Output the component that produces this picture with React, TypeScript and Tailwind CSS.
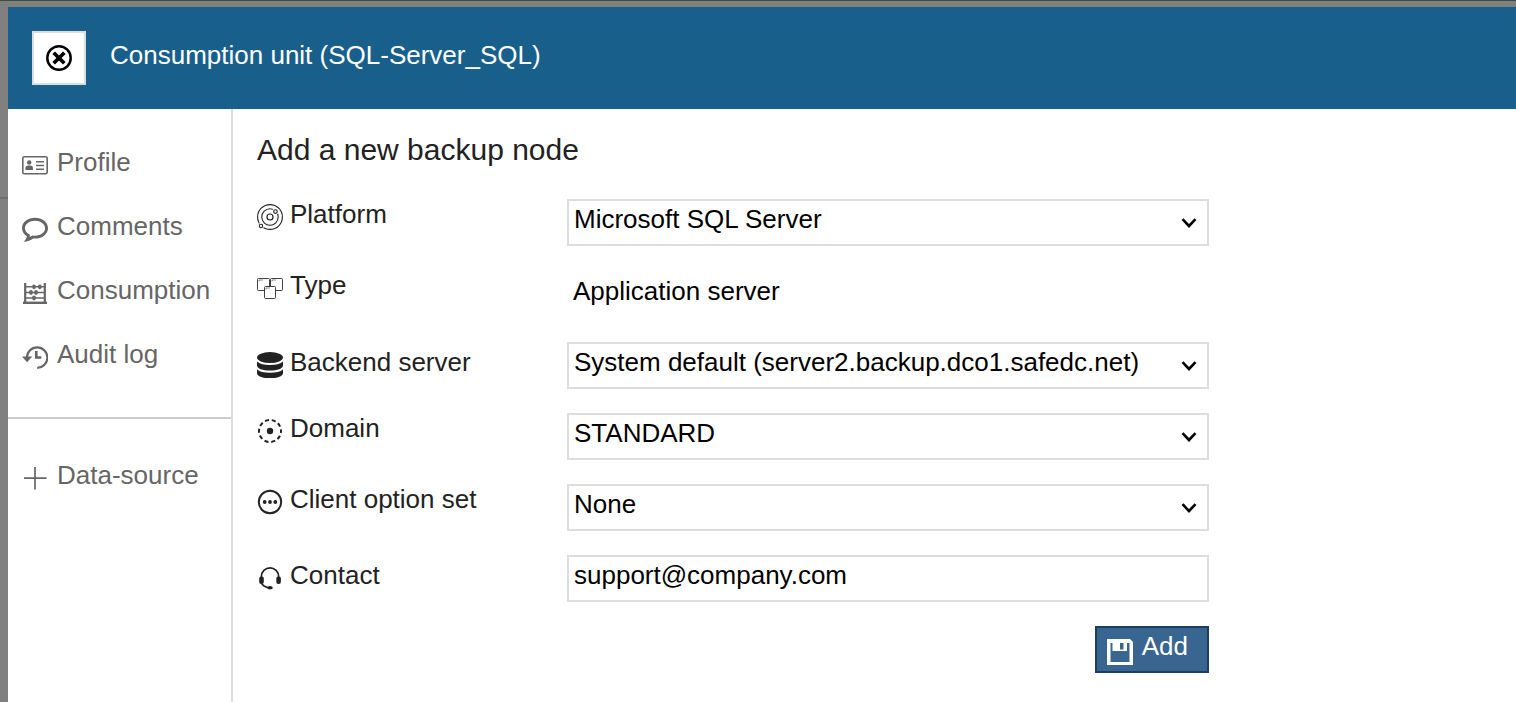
import React, { ReactNode } from 'react';

function Icon({ children, size = 'h-[26px] w-[26px]' }: { children: ReactNode; size?: string }) {
  return (
    <svg viewBox="0 0 26 26" className={`${size} shrink-0`} fill="none" stroke="currentColor" aria-hidden="true">
      {children}
    </svg>
  );
}

const icons = {
  close: (
    <Icon>
      <circle cx="13" cy="13" r="11.7" strokeWidth="2.5" />
      <path d="M7.700 7.700l10.600 10.600M18.300 7.700L7.700 18.300" strokeWidth="3.700" />
    </Icon>
  ),
  profile: (
    <Icon>
      <rect x="0.800" y="4.800" width="24.400" height="17" rx="1.600" strokeWidth="1.600" />
      <circle cx="7.200" cy="10.500" r="2.200" fill="currentColor" stroke="none" />
      <path d="M3.400 18v-1.600c0-2 1.400-2.900 2.600-2.900h2.400c1.400 0 2.600.9 2.600 2.900V18z" fill="currentColor" stroke="none" />
      <path d="M14 9.700h8M14 13.500h8M14 17.200h8" strokeWidth="1.500" />
    </Icon>
  ),
  comments: (
    <Icon>
      <path
        fill="currentColor"
        stroke="none"
        fillRule="evenodd"
        d="M13 1.800C5.800 1.800 0 6.400 0 12.200c0 3.200 1.900 6.200 4.900 8.100-.2 2.200-1.400 3.900-3.400 5.500 4.200-.3 7.300-1.500 9.700-3.300.6.100 1.200.1 1.800.1 7.200 0 13-4.600 13-10.400S20.200 1.800 13 1.800zM13 4.800c5.600 0 10.100 3.300 10.100 7.500s-4.500 7.400-10.100 7.400c-.9 0-1.800-.1-2.700-.300l-2.600 1.700.3-2.400C4.900 17.400 2.900 15 2.900 12.300 2.900 8.100 7.400 4.800 13 4.800z"
      />
    </Icon>
  ),
  consumption: (
    <Icon>
      <path d="M3.200 3v20M22.800 3v20" strokeWidth="2.200" />
      <path d="M1 22.800h24" strokeWidth="2.400" />
      <path d="M4 6.800h18M4 12.500h18M4 18h18" strokeWidth="1.400" />
      <g fill="currentColor" stroke="none">
        <ellipse cx="12" cy="6.800" rx="1.900" ry="2.400" />
        <ellipse cx="17.800" cy="6.800" rx="1.900" ry="2.400" />
        <ellipse cx="9" cy="12.500" rx="1.900" ry="2.400" />
        <ellipse cx="14" cy="12.500" rx="1.900" ry="2.400" />
        <ellipse cx="12" cy="18" rx="1.900" ry="2.400" />
      </g>
    </Icon>
  ),
  audit: (
    <Icon>
      <path d="M5 13.500A10.200 10.200 0 1 1 15.200 23.800" strokeWidth="2.200" />
      <path d="M0 12.400h10.200l-5.100 5.800z" fill="currentColor" stroke="none" />
      <path d="M14.300 7v6.500h5" strokeWidth="2.600" />
    </Icon>
  ),
  plus: (
    <Icon>
      <path d="M13 2v22.500M2 13.200h22.500" strokeWidth="1.700" />
    </Icon>
  ),
  platform: (
    <Icon>
      <circle cx="13" cy="13" r="12.400" strokeWidth="1.100" />
      <circle cx="13" cy="13" r="8.200" strokeWidth="1.100" />
      <circle cx="13" cy="13" r="3" strokeWidth="1.200" />
      <circle cx="18.500" cy="7.600" r="3.100" fill="white" stroke="none" />
      <circle cx="18.500" cy="7.600" r="1.800" strokeWidth="1.100" />
      <circle cx="4" cy="22" r="3" fill="white" stroke="none" />
      <circle cx="4" cy="22" r="1.700" strokeWidth="1.100" />
    </Icon>
  ),
  type: (
    <Icon>
      <g strokeOpacity="0.850">
        <rect x="0.500" y="3.500" width="12" height="12" rx="1" />
        <rect x="13.500" y="3.500" width="12" height="12" rx="1" />
        <rect x="7.500" y="11.500" width="11" height="12" rx="1" fill="white" />
      </g>
      <path d="M2 6.500V5h4M15 6.500V5h4M9 14.500V13h4" strokeWidth="0.500" />
    </Icon>
  ),
  database: (
    <Icon>
      <g fill="currentColor" stroke="none">
        <ellipse cx="13" cy="5.600" rx="13" ry="5.500" />
        <path d="M0 9.500c2.500 2.500 7 3.400 13 3.400s10.500-.9 13-3.400v4c0 3-5.800 5.100-13 5.100S0 16.500 0 13.500z" />
        <path d="M0 17.300c2.500 2.600 7 3.500 13 3.500s10.500-.9 13-3.500v4c0 3-5.800 5-13 5s-13-2-13-5z" />
      </g>
    </Icon>
  ),
  domain: (
    <Icon>
      <circle cx="13" cy="13" r="11" strokeWidth="2" strokeDasharray="4.100 2.810" strokeDashoffset="2" />
      <circle cx="13" cy="13" r="3.200" fill="currentColor" stroke="none" />
    </Icon>
  ),
  options: (
    <Icon>
      <circle cx="13" cy="13" r="11.200" strokeWidth="2" />
      <g fill="currentColor" stroke="none">
        <circle cx="7.700" cy="13" r="1.900" />
        <circle cx="13" cy="13" r="1.900" />
        <circle cx="18.300" cy="13" r="1.900" />
      </g>
    </Icon>
  ),
  contact: (
    <Icon>
      <path d="M4.400 13V11.500a8.600 8.600 0 0 1 17.200 0V13" strokeWidth="1.700" />
      <path d="M4.500 18.500l2.500 2.500 4 1.700" strokeWidth="1.700" />
      <g fill="currentColor" stroke="none">
        <rect x="2.200" y="11.500" width="4.600" height="7.400" rx="2" />
        <rect x="19.300" y="11.500" width="4.600" height="7.400" rx="2" />
        <ellipse cx="13" cy="22.800" rx="2.800" ry="1.700" />
      </g>
    </Icon>
  ),
  save: (
    <Icon>
      <path fillRule="evenodd" fill="currentColor" stroke="none" d="M0 0h23l3 3v23H0zM3.500 4v19h19V4h-2.500v8H5.500V4zM13 4v6.500h3.500V4z" />
    </Icon>
  ),
};

function IconText({ icon, gap, drop = 'mt-[3px] -mb-[3px]', children }: { icon: ReactNode; gap: string; drop?: string; children: ReactNode }) {
  return (
    <span className={`flex items-center whitespace-nowrap ${gap}`}>
      <span className={drop}>{icon}</span>
      <span>{children}</span>
    </span>
  );
}

function NavLink({ icon, children }: { icon: ReactNode; children: ReactNode }) {
  return (
    <li>
      <a href="#" className="flex h-16 items-center pl-3.5">
        <IconText icon={icon} gap="gap-[9px]">{children}</IconText>
      </a>
    </li>
  );
}

const box = 'block h-[47px] w-full rounded-none border-2 border-[#dddddd] bg-white pt-0 pl-[5px] text-black outline-none';

function SelectBox({ id, options }: { id: string; options: string[] }) {
  return (
    <div className="relative">
      <select id={id} className={`${box} appearance-none pr-12 pb-2`}>
        {options.map((o) => (
          <option key={o}>{o}</option>
        ))}
      </select>
      <svg viewBox="0 0 16 12" className="pointer-events-none absolute top-[18px] right-3 h-3 w-4" fill="none" stroke="black" strokeWidth="2.600" aria-hidden="true">
        <path d="M1.500 2.200L8 9l6.500-6.800" />
      </svg>
    </div>
  );
}

function Row({ id, icon, label, low = false, children }: { id: string; icon: ReactNode; label: string; low?: boolean; children: ReactNode }) {
  return (
    <div className="grid grid-cols-[310px_minmax(0,642px)] items-start">
      <label htmlFor={id} className={low ? 'pt-[5px]' : ''}>
        <IconText icon={icon} gap="gap-[7px]">{label}</IconText>
      </label>
      {children}
    </div>
  );
}

export default function App() {
  return (
    <div className="relative min-h-screen border-t border-[#3c4f3a] bg-[#808080] pt-1.5 pl-2 font-['Liberation_Sans',Arial,sans-serif] text-[26px] leading-[30px]">
      <div className="absolute top-[196px] left-0 h-0.5 w-2 bg-[#6e6e6e]" />
      <div className="flex min-h-[calc(100vh-7px)] flex-col bg-white">
        <header className="flex items-center gap-6 bg-[#195f8b] p-6 text-white">
          <button type="button" aria-label="Close" className="flex h-[54px] w-[54px] shrink-0 items-center justify-center border-2 border-[#dddddd] bg-white text-black">
            {icons.close}
          </button>
          <h1 className="pb-1.5">Consumption unit (SQL-Server_SQL)</h1>
        </header>
        <div className="flex grow">
          <nav className="w-[225px] shrink-0 border-r-2 border-[#dddddd] text-[#666666]">
            <ul className="border-b-2 border-[#cccccc] pt-[21px] pb-[31px]">
              <NavLink icon={icons.profile}>Profile</NavLink>
              <NavLink icon={icons.comments}>Comments</NavLink>
              <NavLink icon={icons.consumption}>Consumption</NavLink>
              <NavLink icon={icons.audit}>Audit log</NavLink>
            </ul>
            <ul className="pt-6">
              <NavLink icon={icons.plus}>Data-source</NavLink>
            </ul>
          </nav>
          <main className="grow px-6 pt-6 text-[#222222]">
            <h2 className="text-[30px] leading-[34px]">Add a new backup node</h2>
            <form className="flex max-w-[952px] flex-col gap-6 pt-8" onSubmit={(e) => e.preventDefault()}>
              <Row id="platform" icon={icons.platform} label="Platform">
                <SelectBox id="platform" options={['Microsoft SQL Server']} />
              </Row>
              <Row id="type" icon={icons.type} label="Type">
                <output id="type" className="h-12 pt-1.5 pl-1.5 text-black">Application server</output>
              </Row>
              <Row id="backend" icon={icons.database} label="Backend server" low>
                <SelectBox id="backend" options={['System default (server2.backup.dco1.safedc.net)']} />
              </Row>
              <Row id="domain" icon={icons.domain} label="Domain">
                <SelectBox id="domain" options={['STANDARD']} />
              </Row>
              <Row id="options" icon={icons.options} label="Client option set">
                <SelectBox id="options" options={['None']} />
              </Row>
              <Row id="contact" icon={icons.contact} label="Contact" low>
                <input id="contact" type="text" defaultValue="support@company.com" className={`${box} pb-1.5`} />
              </Row>
              <button type="submit" className="h-[47px] self-end border-2 border-[#1d3f60] bg-[#396690] pr-[19px] pb-2 pl-2.5 text-white">
                <IconText icon={icons.save} gap="gap-[9px]" drop="mt-1.5 -mb-1.5">Add</IconText>
              </button>
            </form>
          </main>
        </div>
      </div>
    </div>
  );
}
